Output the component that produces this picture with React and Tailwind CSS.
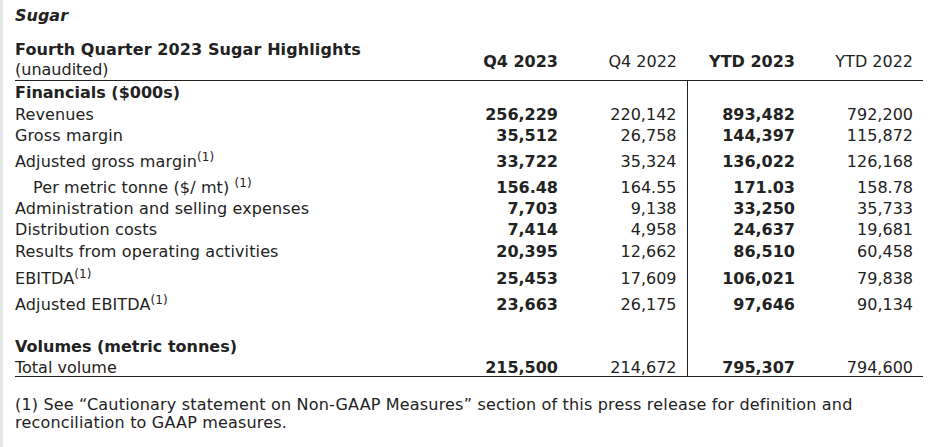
const rows = [
  { label: "Revenues", q4: "256,229", q4p: "220,142", ytd: "893,482", ytdp: "792,200", h: "h-[22px]" },
  { label: "Gross margin", q4: "35,512", q4p: "26,758", ytd: "144,397", ytdp: "115,872", h: "h-[21px]" },
  { label: "Adjusted gross margin", sup: true, q4: "33,722", q4p: "35,324", ytd: "136,022", ytdp: "126,168", h: "h-[30px]" },
  { label: "Per metric tonne ($/ mt) ", sup: true, indent: true, q4: "156.48", q4p: "164.55", ytd: "171.03", ytdp: "158.78", h: "h-[22px]" },
  { label: "Administration and selling expenses", q4: "7,703", q4p: "9,138", ytd: "33,250", ytdp: "35,733", h: "h-[21px]" },
  { label: "Distribution costs", q4: "7,414", q4p: "4,958", ytd: "24,637", ytdp: "19,681", h: "h-[21px]" },
  { label: "Results from operating activities", q4: "20,395", q4p: "12,662", ytd: "86,510", ytdp: "60,458", h: "h-[22px]" },
  { label: "EBITDA", sup: true, q4: "25,453", q4p: "17,609", ytd: "106,021", ytdp: "79,838", h: "h-[32px]" },
  { label: "Adjusted EBITDA", sup: true, q4: "23,663", q4p: "26,175", ytd: "97,646", ytdp: "90,134", h: "h-[20px]" },
];

const Sup = () => (
  <sup className="relative -top-[3px] align-top text-[12px] leading-none">(1)</sup>
);

const cell = "pt-[4px] pb-0 leading-[16px]";
const num = `${cell} pr-[10px] text-right`;

export default function App() {
  return (
    <div
      className="min-h-[447px] w-[928px] border-l-[3px] border-[#e6e6e6] bg-white pl-[12px] pr-[5px] text-[16px] text-[#222]"
      style={{ fontFamily: '"DejaVu Sans", Verdana, sans-serif' }}
    >
      <p className="pt-[6px] font-bold italic leading-[20px]">Sugar</p>

      <table className="mt-[13px] w-[908px] table-fixed border-collapse">
        <colgroup>
          <col className="w-[434px]" />
          <col className="w-[119px]" />
          <col className="w-[119px]" />
          <col className="w-[118px]" />
          <col className="w-[118px]" />
        </colgroup>
        <thead>
          <tr className="border-b border-[#222]">
            <th className="p-0 pt-[1px] text-left align-top font-normal leading-[20px]">
              <div className="font-bold tracking-[0.1px]">Fourth Quarter 2023 Sugar Highlights</div>
              <div>(unaudited)</div>
            </th>
            <th className="pr-[10px] pt-[5px] text-right font-bold">Q4 2023</th>
            <th className="pr-[10px] pt-[5px] text-right font-normal">Q4 2022</th>
            <th className="pr-[10px] pt-[5px] text-right font-bold">YTD 2023</th>
            <th className="pr-[10px] pt-[5px] text-right font-normal">YTD 2022</th>
          </tr>
        </thead>
        <tbody>
          <tr className="h-[21px]">
            <td className={`${cell} pl-0 font-bold`}>Financials ($000s)</td>
            <td></td>
            <td></td>
            <td className="border-l border-[#222]"></td>
            <td></td>
          </tr>
          {rows.map((r) => (
            <tr key={r.label} className={r.h}>
              <td className={`${cell} tracking-[0.12px] ${r.indent ? "pl-[18px]" : "pl-0"}`}>
                {r.label}
                {r.sup && <Sup />}
              </td>
              <td className={`${num} font-bold`}>{r.q4}</td>
              <td className={num}>{r.q4p}</td>
              <td className={`${num} border-l border-[#222] font-bold`}>{r.ytd}</td>
              <td className={num}>{r.ytdp}</td>
            </tr>
          ))}
          <tr className="h-[22px]">
            <td></td>
            <td></td>
            <td></td>
            <td className="border-l border-[#222]"></td>
            <td></td>
          </tr>
          <tr className="h-[21px]">
            <td className={`${cell} pl-0 font-bold`}>Volumes (metric tonnes)</td>
            <td></td>
            <td></td>
            <td className="border-l border-[#222]"></td>
            <td></td>
          </tr>
          <tr className="h-[21px] border-b border-[#222]">
            <td className={`${cell} pl-0`}>Total volume</td>
            <td className={`${num} font-bold`}>215,500</td>
            <td className={num}>214,672</td>
            <td className={`${num} border-l border-[#222] font-bold`}>795,307</td>
            <td className={num}>794,600</td>
          </tr>
        </tbody>
      </table>

      <p className="mt-[19px] w-[900px] leading-[18px] tracking-[0.18px]">
        (1) See “Cautionary statement on Non-GAAP Measures” section of this press release for definition and
        reconciliation to GAAP measures.
      </p>
    </div>
  );
}
